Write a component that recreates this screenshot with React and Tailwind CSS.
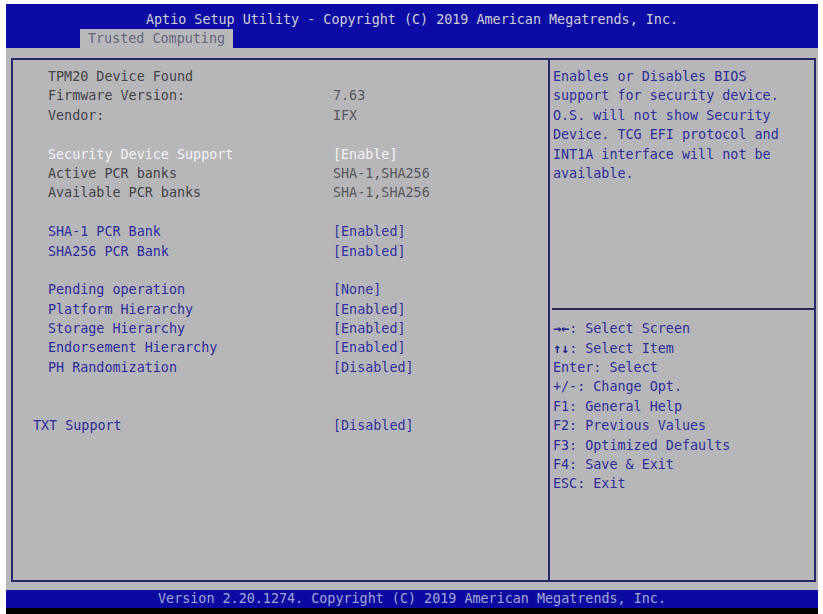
import React from "react";

const FONT = { fontFamily: '"DejaVu Sans Mono", "Liberation Mono", monospace' };

const rows = [
  { l: "TPM20 Device Found", v: "", t: "gray" },
  { l: "Firmware Version:", v: "7.63", t: "gray" },
  { l: "Vendor:", v: "IFX", t: "gray" },
  null,
  { l: "Security Device Support", v: "[Enable]", t: "sel" },
  { l: "Active PCR banks", v: "SHA-1,SHA256", t: "gray" },
  { l: "Available PCR banks", v: "SHA-1,SHA256", t: "gray" },
  null,
  { l: "SHA-1 PCR Bank", v: "[Enabled]", t: "blue" },
  { l: "SHA256 PCR Bank", v: "[Enabled]", t: "blue" },
  null,
  { l: "Pending operation", v: "[None]", t: "blue" },
  { l: "Platform Hierarchy", v: "[Enabled]", t: "blue" },
  { l: "Storage Hierarchy", v: "[Enabled]", t: "blue" },
  { l: "Endorsement Hierarchy", v: "[Enabled]", t: "blue" },
  { l: "PH Randomization", v: "[Disabled]", t: "blue" },
  null,
  null,
  { l: "TXT Support", v: "[Disabled]", t: "blue", out: true },
];

const desc = [
  "Enables or Disables BIOS",
  "support for security device.",
  "O.S. will not show Security",
  "Device. TCG EFI protocol and",
  "INT1A interface will not be",
  "available.",
];

const help = [
  ["\u2192\u2190", ": Select Screen"],
  ["\u2191\u2193", ": Select Item"],
  ["", "Enter: Select"],
  ["", "+/-: Change Opt."],
  ["", "F1: General Help"],
  ["", "F2: Previous Values"],
  ["", "F3: Optimized Defaults"],
  ["", "F4: Save & Exit"],
  ["", "ESC: Exit"],
];

function Row({ r }) {
  if (!r) return <div className="h-[19.4px]" />;
  let lc = "text-[#444448]";
  let vc = "text-[#58585c]";
  if (r.t === "sel") {
    lc = "text-[#f4f4f4]";
    vc = "text-[#f4f4f4]";
  } else if (r.t === "blue") {
    lc = "text-[#2c2c9c]";
    vc = "text-[#32329e]";
  }
  return (
    <div className={`flex h-[19.4px] items-center whitespace-pre ${r.out ? "pl-[20px]" : "pl-[35px]"}`}>
      <div className={`${r.out ? "w-[300px]" : "w-[285px]"} ${lc}`}>{r.l}</div>
      <div className={vc}>{r.v}</div>
    </div>
  );
}

export default function App() {
  return (
    <div
      className="w-[823px] h-[614px] bg-white flex flex-col pt-[4px] pl-[6px] pr-[5px] overflow-hidden text-[13.4px] leading-[19.4px]"
      style={FONT}
    >
      {/* header */}
      <div className="h-[44px] bg-[#0b0ba6] flex flex-col pt-[6px]">
        <div className="h-[19px] flex items-center justify-center text-[#cfcfd6] whitespace-pre">
          Aptio Setup Utility - Copyright (C) 2019 American Megatrends, Inc.
        </div>
        <div className="flex pl-[74px]">
          <div className="h-[19px] bg-[#b9b9bb] px-[8px] flex items-center text-[#64647e] whitespace-pre">
            Trusted Computing
          </div>
        </div>
      </div>

      {/* body */}
      <div className="h-[542px] bg-[#b7b7b9] pt-[10px] pl-[5px] pr-[2px] pb-[8px] flex flex-col">
        <div className="flex-1 flex border-2 border-[#28286e]">
          <div className="w-[535px] pt-[7px] flex flex-col">
            {rows.map((r, i) => (
              <Row key={i} r={r} />
            ))}
          </div>
          <div className="flex-1 border-l-2 border-[#28286e] pt-[7px] flex flex-col">
            <div className="h-[232.8px] pl-[3px] text-[#2e2e9a] whitespace-pre">
              {desc.map((d, i) => (
                <div key={i} className="h-[19.4px] flex items-center">
                  {d}
                </div>
              ))}
            </div>
            <div className="h-[19.4px] flex items-center pl-[2px]">
              <div className="h-[2px] w-full bg-[#2a2a4e]" />
            </div>
            <div className="pl-[3px] text-[#2e2e9a] whitespace-pre">
              {help.map(([a, d], i) => (
                <div key={i} className="h-[19.4px] flex items-center">
                  {a && <span className="font-bold text-[#24248a]">{a}</span>}
                  <span>{d}</span>
                </div>
              ))}
            </div>
          </div>
        </div>
      </div>

      {/* footer */}
      <div className="h-[18px] bg-[#0a0aa2] flex items-center justify-center text-[#a6a6d6] whitespace-pre">
        Version 2.20.1274. Copyright (C) 2019 American Megatrends, Inc.
      </div>
      <div className="flex-1 bg-black" />
    </div>
  );
}
